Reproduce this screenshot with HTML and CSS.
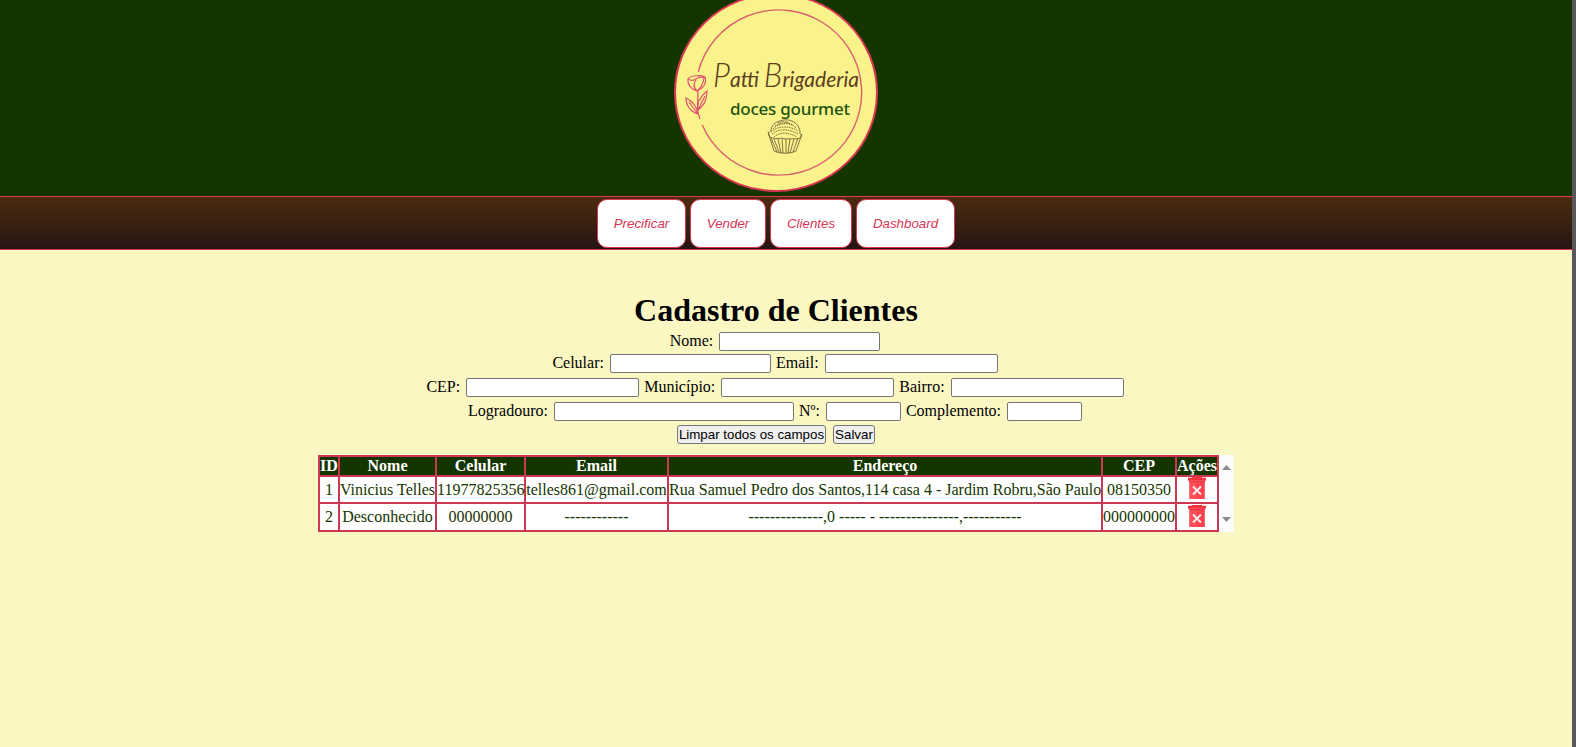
FILE: index.html
```html
<!DOCTYPE html>
<html lang="pt-BR">
<head>
<meta charset="utf-8">
<title>Cadastro de Clientes</title>
<link rel="stylesheet" href="styles.css">
</head>
<body>
<svg class="defs" width="0" height="0" aria-hidden="true">
  <symbol id="trash" viewBox="0 0 18 22">
    <path fill="#f5333f" d="M0 .8h4V0h10v.8h4v3H0z"/>
    <path fill="#ff5059" d="M1.2 3.8H9V22H1.2z"/>
    <path fill="#fb434e" d="M9 3.8h7.8V22H9z"/>
    <path fill="#f5333f" d="M1.2 3.8h15.6v1.4H1.2z"/>
    <path stroke="#ffecec" stroke-width="1.9" fill="none" d="m5 9.5 8 8m0-8-8 8"/>
  </symbol>
</svg>
<header class="header">
  <svg class="logo" width="204" height="199" viewBox="674 -7 204 199">
    <ellipse cx="776" cy="92.5" rx="101" ry="98.5" fill="#faf28a" stroke="#d93654" stroke-width="2"/>
    <path d="M698.3 71.7A83 82.6 0 1 1 702.3 125" fill="none" stroke="#d9606e" stroke-width="1.4"/>
    <g fill="none" stroke="#dc5273" stroke-width="1.2">
      <path d="M688 79c2-4 14-4 17-2 2 6-2 12-8 14-6-2-10-7-9-12z"/>
      <path d="M688 79c3 2 5 2 8 0l4-2 5 1M697 91c-3-3-4-7-1-11M697 91c4-3 6-7 7-13M698 91c0 9-1 17 0 22l2 6"/>
      <path d="M698 110c-2-8 3-14 9-19 0 9-3 15-9 19zm0 4c-7-2-12-8-12-16 6 3 11 8 12 16zm0-4 7-14m-7 18-9-12"/>
    </g>
    <text class="logo-name" x="713" y="87" textLength="146" lengthAdjust="spacingAndGlyphs"><tspan class="logo-cap">P</tspan>atti <tspan class="logo-cap">B</tspan>rigaderia</text>
    <text class="logo-tag" x="730" y="114.5" textLength="120" lengthAdjust="spacing">doces gourmet</text>
    <g fill="none" stroke="#6b5233" stroke-width=".8">
      <path d="M770 137c-3-3-1-5 1-6 0-5 4-9 9-10 7-3 15 0 18 5 2 3 2 5 2 8 2 1 1 3 0 4-5 2-7 0-10 1-3-1-5 1-8-1-4 1-8 1-12-1z"/>
      <path stroke-dasharray="1.6 .8" d="M773 129c5-6 17-8 23-1M771 132c8-7 19-6 27-1M772 134c7-6 18-5 26 0M774 137c7-6 16-4 23 0M775 126c6-4 13-4 18-1M778 123c4-2 8-2 11 0"/>
      <path d="M768 132l6 19c6 3 16 3 22 0l6-17M771 138l6 14M774 139l5 13M778 139l3 14M782 139l1 14M786 139v14M790 139l-2 14M794 139l-4 14M798 138l-5 14"/>
    </g>
  </svg>
</header>
<nav class="nav">
  <button class="nav-btn nav-precificar">Precificar</button>
  <button class="nav-btn nav-vender">Vender</button>
  <button class="nav-btn nav-clientes">Clientes</button>
  <button class="nav-btn nav-dashboard">Dashboard</button>
</nav>
<main class="main">
  <h1 class="title">Cadastro de Clientes</h1>
  <form class="form">
    <div class="row row-first"><label class="field">Nome: <input class="input"></label></div>
    <div class="row"><label class="field">Celular: <input class="input"></label><label class="field">Email: <input class="input input-m"></label></div>
    <div class="row"><label class="field">CEP: <input class="input input-m"></label><label class="field">Município: <input class="input input-m"></label><label class="field">Bairro: <input class="input input-m"></label></div>
    <div class="row"><label class="field">Logradouro: <input class="input input-l"></label><label class="field">Nº: <input class="input input-s"></label><label class="field">Complemento: <input class="input input-s"></label></div>
    <div class="row row-actions"><button type="button" class="btn btn-clear">Limpar todos os campos</button><button type="button" class="btn btn-save">Salvar</button></div>
  </form>
  <div class="list">
    <table class="table">
      <colgroup><col class="c-id"><col class="c-nome"><col class="c-cel"><col class="c-email"><col class="c-end"><col class="c-cep"><col class="c-acoes"></colgroup>
      <thead><tr><th>ID</th><th>Nome</th><th>Celular</th><th>Email</th><th>Endereço</th><th>CEP</th><th>Ações</th></tr></thead>
      <tbody>
        <tr><td>1</td><td>Vinicius Telles</td><td>11977825356</td><td>telles861@gmail.com</td><td>Rua Samuel Pedro dos Santos,114 casa 4 - Jardim Robru,São Paulo</td><td>08150350</td><td><svg class="trash"><use href="#trash"/></svg></td></tr>
        <tr class="last"><td>2</td><td>Desconhecido</td><td>00000000</td><td>------------</td><td>--------------,0 ----- - ---------------,-----------</td><td>000000000</td><td><svg class="trash"><use href="#trash"/></svg></td></tr>
      </tbody>
    </table>
    <div class="scroll">
      <svg width="9" height="5" viewBox="0 0 9 5"><path d="M0 5 4.5 0 9 5z"/></svg>
      <svg width="9" height="5" viewBox="0 0 9 5"><path d="M0 0 4.5 5 9 0z"/></svg>
    </div>
  </div>
</main>
</body>
</html>
```
FILE: styles.css
```css
* { box-sizing: border-box; }
body {
  margin: 0;
  height: 747px;
  overflow: hidden;
  border-right: 4px solid #58585a;
  background: #fbf7c3;
  font: 16px/18px "Liberation Serif", "Times New Roman", serif;
}
.defs { display: block; }
.header {
  height: 196px;
  padding-right: 20px;
  display: flex;
  justify-content: center;
  align-items: flex-start;
  background: #153500;
}
.logo { display: block; margin-top: -7px; }
.logo-name { font: italic 22px Lato, sans-serif; fill: #5e3c22; }
.logo-cap { font-size: 33px; font-weight: 300; }
.logo-tag { font: 500 17px "Noto Sans", sans-serif; fill: #1f5312; }
.nav {
  height: 54px;
  padding: 2px 20px 0 0;
  display: flex;
  justify-content: center;
  gap: 4px;
  border-top: 1px solid #e03a55;
  border-bottom: 1px solid #d93654;
  background: linear-gradient(#4c2c0f, #261413);
}
.nav-btn {
  height: 49px;
  padding: 0;
  border: 1px solid #d93654;
  border-radius: 10px;
  background: #fff;
  color: #d93654;
  font: italic 13.333px "Liberation Sans", Arial, sans-serif;
}
.nav-precificar { width: 89px; }
.nav-vender { width: 76px; }
.nav-clientes { width: 82px; }
.nav-dashboard { width: 99px; }
.main { padding: 42px 20px 0 0; }
.title { margin: 0; font-size: 32px; line-height: 37px; text-align: center; }
.form { margin-top: 2px; }
.row { display: flex; justify-content: center; gap: 5px; height: 24px; padding: 1px 2px 0 0; }
.row-first { height: 22px; }
.field { display: flex; gap: 6px; }
.input {
  width: 161px;
  height: 19px;
  padding: 0;
  border: 1px solid #767676;
  border-radius: 2px;
  background: #fff;
}
.input-s { width: 75px; }
.input-m { width: 173px; }
.input-l { width: 240px; }
.row-actions { gap: 7px; padding: 0; }
.btn {
  height: 19px;
  padding: 0;
  border: 1px solid #767676;
  border-radius: 3px;
  background: #efefef;
  color: #000;
  font: 13.333px "Liberation Sans", Arial, sans-serif;
}
.btn-clear { width: 149px; }
.btn-save { width: 42px; }
.list { display: flex; width: 916px; margin: 6px auto 0; }
.table {
  width: 901px;
  table-layout: fixed;
  border-collapse: collapse;
  background: #fff;
  color: #153500;
  text-align: center;
  white-space: nowrap;
}
.table th, .table td { padding: 0; border: 2px solid #cc3853; }
.table th { height: 20px; background: #153500; color: #fff; }
.table td { height: 27px; }
.table .last td { height: 28px; }
.c-id { width: 20px; }
.c-nome { width: 97px; }
.c-cel { width: 89px; }
.c-email { width: 143px; }
.c-end { width: 434px; }
.c-cep { width: 74px; }
.c-acoes { width: 42px; }
.trash { display: block; width: 18px; height: 22px; margin: -3px auto 0; }
.scroll {
  width: 15px;
  padding: 10px 0;
  display: flex;
  flex-direction: column;
  justify-content: space-between;
  align-items: center;
  background: #fcfcfc;
  fill: #8b8b8b;
}
```
